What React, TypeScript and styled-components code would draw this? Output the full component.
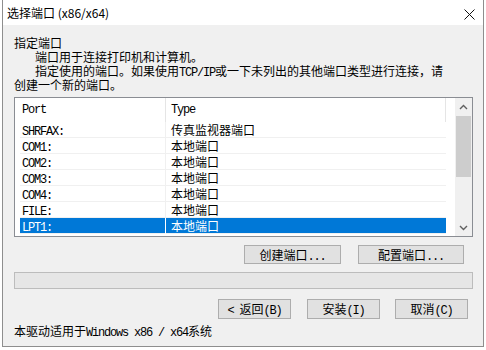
import React from "react";
import styled, { createGlobalStyle } from "styled-components";

const GlobalStyle = createGlobalStyle`
  html, body {
    margin: 0;
    padding: 0;
    background: #ffffff;
  }
  body {
    font-family: "Noto Sans CJK SC", "Liberation Sans", sans-serif;
    font-size: 12px;
    color: #000000;
  }
`;

const Screen = styled.div`
  width: 486px;
  height: 350px;
  overflow: hidden;
  padding-left: 2px;
  box-sizing: border-box;
`;

const Window = styled.div`
  width: 482px;
  height: 347px;
  box-sizing: border-box;
  border: 1px solid #8e8e8e;
  border-top: none;
  background: #f0f0f0;
  display: flex;
  flex-direction: column;
`;

const TitleBar = styled.div`
  height: 25px;
  flex: none;
  background: #ffffff;
  display: flex;
  align-items: center;
  padding-left: 4px;
  padding-right: 8px;
`;

const Title = styled.span`
  font-size: 12px;
  line-height: 14px;
  white-space: nowrap;
`;

const CloseIcon = styled.svg`
  margin-left: auto;
  margin-top: 3px;
  width: 11px;
  height: 11px;
`;

const Body = styled.div`
  flex: 1;
  display: flex;
  flex-direction: column;
  padding: 11px 10px 0 11px;
`;

const Intro = styled.div`
  white-space: nowrap;
`;

const Line = styled.div<{ $indent?: boolean }>`
  height: 14px;
  line-height: 14px;
  padding-left: ${(p) => (p.$indent ? "21px" : "0")};
`;

const Latin = styled.span`
  font-family: "Liberation Mono", monospace;
  font-size: 12px;
  letter-spacing: -1.2px;
  line-height: 1;
`;

const ListBox = styled.div`
  margin-top: 5px;
  height: 140px;
  box-sizing: border-box;
  border: 1px solid #8a8d93;
  background: #ffffff;
  display: flex;
`;

const ListArea = styled.div`
  flex: 1;
  display: flex;
  flex-direction: column;
`;

const Header = styled.div`
  height: 24px;
  display: grid;
  grid-template-columns: 146px 280px;
  margin-left: 5px;
  align-items: center;
`;

const HeaderCell = styled.div<{ $divider?: boolean }>`
  height: 100%;
  display: flex;
  align-items: center;
  padding-left: ${(p) => (p.$divider ? "2px" : "5px")};
  border-right: 1px solid #e5e5e5;
  box-sizing: border-box;
`;

const Row = styled.div<{ $selected?: boolean }>`
  height: 16px;
  box-sizing: border-box;
  margin-left: 5px;
  width: 426px;
  display: grid;
  grid-template-columns: 146px 280px;
  border-bottom: 1px solid #f0f0f0;
  background: ${(p) => (p.$selected ? "#0078d7" : "transparent")};
  color: ${(p) => (p.$selected ? "#ffffff" : "#000000")};
`;

const Cell = styled.div<{ $first?: boolean; $selected?: boolean }>`
  line-height: 16px;
  white-space: nowrap;
  padding-left: ${(p) => (p.$first ? "2px" : "5px")};
  border-right: ${(p) =>
    p.$first ? `1px solid ${p.$selected ? "#ffffff" : "#f0f0f0"}` : "none"};
`;

const ScrollBar = styled.div`
  width: 17px;
  flex: none;
  background: #f0f0f0;
  display: flex;
  flex-direction: column;
`;

const ArrowBox = styled.div`
  height: 17px;
  flex: none;
  display: flex;
  align-items: center;
  justify-content: center;
`;

const Thumb = styled.div`
  height: 61px;
  margin: 1px 1px 0 1px;
  background: #cdcdcd;
`;

const Spacer = styled.div`
  flex: 1;
`;

const ButtonRow = styled.div<{ $top: number; $right: number; $gap: number }>`
  display: flex;
  justify-content: flex-end;
  margin-top: ${(p) => p.$top}px;
  padding-right: ${(p) => p.$right}px;
  gap: ${(p) => p.$gap}px;
`;

const Button = styled.button<{ $w: number; $h?: number }>`
  width: ${(p) => p.$w}px;
  height: ${(p) => p.$h ?? 19}px;
  box-sizing: border-box;
  border: 1px solid #adadad;
  background: #e1e1e1;
  font-family: "Noto Sans CJK SC", sans-serif;
  font-size: 12px;
  color: #000000;
  padding: 0;
  margin: 0;
  line-height: 16px;
  white-space: nowrap;
`;

const Progress = styled.div`
  margin-top: 8px;
  height: 17px;
  box-sizing: border-box;
  border: 1px solid #bcbcbc;
  background: #e6e6e6;
`;

const Footer = styled.div`
  margin-top: 5px;
  height: 14px;
  line-height: 14px;
  white-space: nowrap;
`;

function Mixed({ text }: { text: string }) {
  const parts = text.split(/([\x20-\x7e]+)/);
  return (
    <>
      {parts.map((p, i) => (i % 2 === 1 ? <Latin key={i}>{p}</Latin> : p))}
    </>
  );
}

function Chevron({ up }: { up?: boolean }) {
  return (
    <svg width="9" height="6" viewBox="0 0 9 6">
      <path
        d={up ? "M1 5 L4.5 1.5 L8 5" : "M1 1 L4.5 4.5 L8 1"}
        fill="none"
        stroke="#606060"
        strokeWidth="1.4"
      />
    </svg>
  );
}

const ports = [
  { port: "SHRFAX:", type: "传真监视器端口" },
  { port: "COM1:", type: "本地端口" },
  { port: "COM2:", type: "本地端口" },
  { port: "COM3:", type: "本地端口" },
  { port: "COM4:", type: "本地端口" },
  { port: "FILE:", type: "本地端口" },
  { port: "LPT1:", type: "本地端口" },
];

export default function App() {
  const selected = "LPT1:";
  return (
    <Screen>
      <GlobalStyle />
      <Window>
        <TitleBar>
          <Title>选择端口 (x86/x64)</Title>
          <CloseIcon viewBox="0 0 11 11">
            <path d="M0.5 0.5 L10.5 10.5 M10.5 0.5 L0.5 10.5" stroke="#111" strokeWidth="1" />
          </CloseIcon>
        </TitleBar>
        <Body>
          <Intro>
            <Line>指定端口</Line>
            <Line $indent>端口用于连接打印机和计算机。</Line>
            <Line $indent>
              <Mixed text="指定使用的端口。如果使用TCP/IP或一下未列出的其他端口类型进行连接，请" />
            </Line>
            <Line>创建一个新的端口。</Line>
          </Intro>
          <ListBox>
            <ListArea>
              <Header>
                <HeaderCell $divider>
                  <Latin>Port</Latin>
                </HeaderCell>
                <HeaderCell>
                  <Latin>Type</Latin>
                </HeaderCell>
              </Header>
              {ports.map((r) => {
                const sel = r.port === selected;
                return (
                  <Row key={r.port} $selected={sel}>
                    <Cell $first $selected={sel}>
                      <Latin>{r.port}</Latin>
                    </Cell>
                    <Cell>{r.type}</Cell>
                  </Row>
                );
              })}
            </ListArea>
            <ScrollBar>
              <ArrowBox>
                <Chevron up />
              </ArrowBox>
              <Thumb />
              <Spacer />
              <ArrowBox>
                <Chevron />
              </ArrowBox>
            </ScrollBar>
          </ListBox>
          <ButtonRow $top={8} $right={9} $gap={17}>
            <Button $w={97}>
              <Mixed text="创建端口..." />
            </Button>
            <Button $w={106}>
              <Mixed text="配置端口..." />
            </Button>
          </ButtonRow>
          <Progress />
          <ButtonRow $top={10} $right={5} $gap={16}>
            <Button $w={73} $h={20}>
              <Mixed text="< 返回(B)" />
            </Button>
            <Button $w={73} $h={20} style={{ marginRight: -1 }}>
              <Mixed text="安装(I)" />
            </Button>
            <Button $w={73} $h={20}>
              <Mixed text="取消(C)" />
            </Button>
          </ButtonRow>
          <Footer>
            <Mixed text="本驱动适用于Windows x86 / x64系统" />
          </Footer>
        </Body>
      </Window>
    </Screen>
  );
}
